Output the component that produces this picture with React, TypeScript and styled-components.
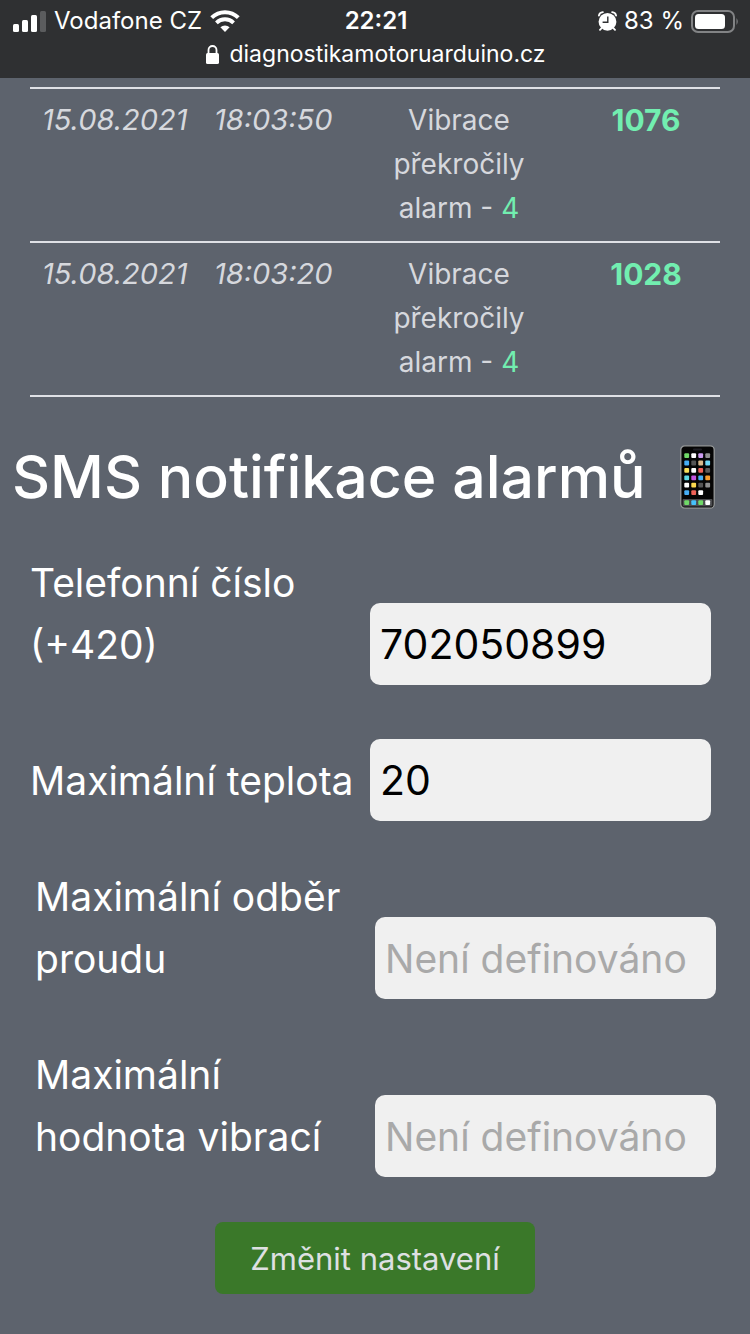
import React from "react";
import styled, { createGlobalStyle } from "styled-components";

const GlobalStyle = createGlobalStyle`
  * { box-sizing: border-box; }
  body {
    margin: 0;
    background: #5d636d;
    color: #fff;
    font-family: Inter, "Noto Sans", sans-serif;
  }
`;

const BrowserBar = styled.header`
  background: #2f3032;
  padding: 4px 11px 8px 13px;
`;

const StatusRow = styled.div`
  display: grid;
  grid-template-columns: 1fr auto 1fr;
  align-items: center;
  font-size: 24px;
  line-height: 34px;
`;

const StatusGroup = styled.div<{ $end?: boolean }>`
  display: flex;
  align-items: center;
  justify-content: ${(p) => (p.$end ? "flex-end" : "flex-start")};
  gap: ${(p) => (p.$end ? 7 : 8)}px;
  white-space: nowrap;
`;

const Clock = styled.time`
  font-weight: 600;
`;

const AddressRow = styled.div`
  display: flex;
  align-items: center;
  justify-content: center;
  gap: 10px;
  font-size: 23px;
  line-height: 32px;
`;

const Page = styled.main`
  padding: 9px 0 40px;
`;

const TableWrap = styled.div`
  padding: 0 30px;
`;

const AlarmTable = styled.table`
  width: 100%;
  table-layout: fixed;
  border-collapse: collapse;
  border-bottom: 2px solid #dfe1e6;
  color: #d6d8dd;
  font-size: 28px;
  line-height: 44px;
`;

const Column = styled.col<{ $width: number }>`
  width: ${(p) => p.$width}px;
`;

const AlarmRow = styled.tr`
  border-top: 2px solid #dfe1e6;
`;

const Cell = styled.td`
  padding: 9px 12px 11px;
  vertical-align: top;
  text-align: center;
`;

const TimeCell = styled(Cell)`
  text-align: left;
  font-size: 29px;
  font-style: italic;
  white-space: nowrap;
`;

const Threshold = styled.span`
  display: inline-block;
  white-space: nowrap;
`;

const Level = styled.span`
  color: #72eeb0;
`;

const Reading = styled.strong`
  color: #72eeb0;
  font-size: 30px;
  font-weight: 700;
`;

const Title = styled.h1`
  display: flex;
  align-items: center;
  gap: 34px;
  margin: 40px 12px 35px;
  font-size: 59px;
  line-height: 80px;
  font-weight: 500;
  white-space: nowrap;
`;

const Settings = styled.form`
  display: flex;
  flex-direction: column;
  gap: 45px;
`;

const Field = styled.div<{ $inset?: boolean }>`
  display: grid;
  grid-template-columns: 340fr 341fr;
  align-items: end;
  min-height: 91px;
  padding: ${(p) => (p.$inset ? "0 34px 0 35px" : "0 39px 0 30px")};
`;

const Label = styled.label`
  padding-bottom: 9px;
  font-size: 39px;
  line-height: 62px;
`;

const TextBox = styled.input`
  width: 100%;
  height: 82px;
  padding: 0 10px;
  border: 0;
  border-radius: 10px;
  background: #f0f0f0;
  color: #000;
  font: inherit;
  font-size: 41px;
  &::placeholder {
    color: #a9a9a9;
    font-size: 39px;
    opacity: 1;
  }
`;

const SubmitButton = styled.button`
  align-self: center;
  min-width: 320px;
  height: 72px;
  padding: 0 32px;
  border: 0;
  border-radius: 8px;
  background: #3a7829;
  color: #dee0e2;
  font: inherit;
  font-size: 31px;
`;

const SignalIcon = () => (
  <svg width="33" height="21" viewBox="0 0 33 21" fill="#fff" aria-hidden="true">
    <rect x="0" y="13" width="6" height="8" rx="1.5" />
    <rect x="9" y="9" width="6" height="12" rx="1.5" />
    <rect x="18" y="4" width="6" height="17" rx="1.5" />
    <rect x="27" y="0" width="6" height="21" rx="1.5" fill="#5b5c5e" />
  </svg>
);

const WifiIcon = () => (
  <svg width="30" height="22" viewBox="0 0 30 22" fill="none" stroke="#fff" aria-hidden="true">
    <path d="M1.7 7.6a19 19 0 0 1 26.6 0" strokeWidth="4" />
    <path d="M6.400 12.8a12.2 12.2 0 0 1 17.2 0" strokeWidth="3.8" />
    <path d="M15 22l-4.600-4.700a6.600 6.600 0 0 1 9.200 0z" fill="#fff" stroke="none" />
  </svg>
);

const LockIcon = () => (
  <svg width="13" height="19" viewBox="0 0 13 19" aria-hidden="true">
    <path d="M2.5 9V5a4 4 0 0 1 8 0v4" fill="none" stroke="#fff" strokeWidth="1.8" />
    <rect x="0" y="8" width="13" height="11" rx="1.6" fill="#fff" />
  </svg>
);

const AlarmIcon = () => (
  <svg width="19" height="20" viewBox="0 0 19 20" aria-hidden="true">
    <path
      d="M0.900 4.600Q1.400 1.500 4.900 1.100M18.100 4.600Q17.600 1.500 14.100 1.100M3.400 17.400L2 18.900M15.600 17.400L17 18.900"
      fill="none"
      stroke="#fff"
      strokeWidth="1.8"
      strokeLinecap="round"
    />
    <circle cx="9.500" cy="10.800" r="8.900" fill="#fff" />
    <path d="M9.800 5.500v5.700H4.600" fill="none" stroke="#2f3032" strokeWidth="1.400" />
  </svg>
);

const BatteryIcon = () => (
  <svg width="48" height="23" viewBox="0 0 48 23" aria-hidden="true">
    <rect x="1" y="1" width="42" height="21" rx="6" fill="none" stroke="#828385" strokeWidth="2" />
    <rect x="4" y="4" width="30" height="15" rx="3.5" fill="#fff" />
    <path d="M45.5 8q2.5 3.500 0 7z" fill="#828385" />
  </svg>
);

const appColors = [
  ["#70d968", "#fff", "#cc9cf0", "#8f8f8f"],
  ["#46aef5", "#555", "#d8b98c", "#71d8f5"],
  ["#fae05a", "#fff", "#ef6257", "#5a5a5a"],
  ["#5fd9e5", "#c453e0", "#46aef5", "#f59b2c"],
  ["#fff", "#fbd94f", "#555", "#8f8f8f"],
  ["#46aef5", "#ef6257", "#fff"],
];

const dockColors = ["#70d968", "#46c1fa", "#70d968", "#fff"];

const PhoneIcon = () => (
  <svg width="36" height="64" viewBox="0 0 36 64" role="img" aria-label="📱">
    <rect x="0.8" y="0.8" width="33.400" height="62.400" rx="4" fill="#050505" stroke="#96999a" strokeWidth="1.3" />
    <rect x="13" y="3.500" width="9" height="2" rx="1" fill="#1e1e24" />
    <rect x="2.500" y="54" width="30" height="7.500" rx="1" fill="#4a4b4e" />
    {appColors.map((row, r) =>
      row.map((color, c) => (
        <rect key={`${r}-${c}`} x={4.3 + c * 7} y={8.2 + r * 7.4} width="4.800" height="4.800" rx="1" fill={color} />
      ))
    )}
    {dockColors.map((color, c) => (
      <rect key={c} x={4.3 + c * 7} y="55.300" width="4.800" height="4.800" rx="1" fill={color} />
    ))}
  </svg>
);

const alarms = [
  { date: "15.08.2021", time: "18:03:50", level: 4, value: 1076 },
  { date: "15.08.2021", time: "18:03:20", level: 4, value: 1028 },
];

const fields = [
  { id: "phone", label: "Telefonní číslo (+420)", value: "702050899", type: "tel" },
  { id: "temperature", label: "Maximální teplota", value: "20", type: "text" },
  { id: "current", label: "Maximální odběr proudu", value: "", type: "text", inset: true },
  { id: "vibration", label: "Maximální hodnota vibrací", value: "", type: "text", inset: true },
];

export default function App() {
  return (
    <>
      <GlobalStyle />
      <BrowserBar>
        <StatusRow>
          <StatusGroup>
            <SignalIcon />
            <span>Vodafone CZ</span>
            <WifiIcon />
          </StatusGroup>
          <Clock>22:21</Clock>
          <StatusGroup $end>
            <AlarmIcon />
            <span>83 %</span>
            <BatteryIcon />
          </StatusGroup>
        </StatusRow>
        <AddressRow>
          <LockIcon />
          <span>diagnostikamotoruarduino.cz</span>
        </AddressRow>
      </BrowserBar>
      <Page>
        <TableWrap>
          <AlarmTable>
            <colgroup>
              <Column $width={172} />
              <Column $width={144} />
              <Column $width={226} />
              <Column $width={148} />
            </colgroup>
            <tbody>
              {alarms.map((alarm) => (
                <AlarmRow key={alarm.time}>
                  <TimeCell>{alarm.date}</TimeCell>
                  <TimeCell>{alarm.time}</TimeCell>
                  <Cell>
                    Vibrace překročily{" "}
                    <Threshold>
                      alarm - <Level>{alarm.level}</Level>
                    </Threshold>
                  </Cell>
                  <Cell>
                    <Reading>{alarm.value}</Reading>
                  </Cell>
                </AlarmRow>
              ))}
            </tbody>
          </AlarmTable>
        </TableWrap>
        <Title>
          SMS notifikace alarmů
          <PhoneIcon />
        </Title>
        <Settings onSubmit={(e) => e.preventDefault()}>
          {fields.map((f) => (
            <Field key={f.id} $inset={f.inset}>
              <Label htmlFor={f.id}>{f.label}</Label>
              <TextBox id={f.id} type={f.type} defaultValue={f.value} placeholder="Není definováno" />
            </Field>
          ))}
          <SubmitButton type="submit">Změnit nastavení</SubmitButton>
        </Settings>
      </Page>
    </>
  );
}
